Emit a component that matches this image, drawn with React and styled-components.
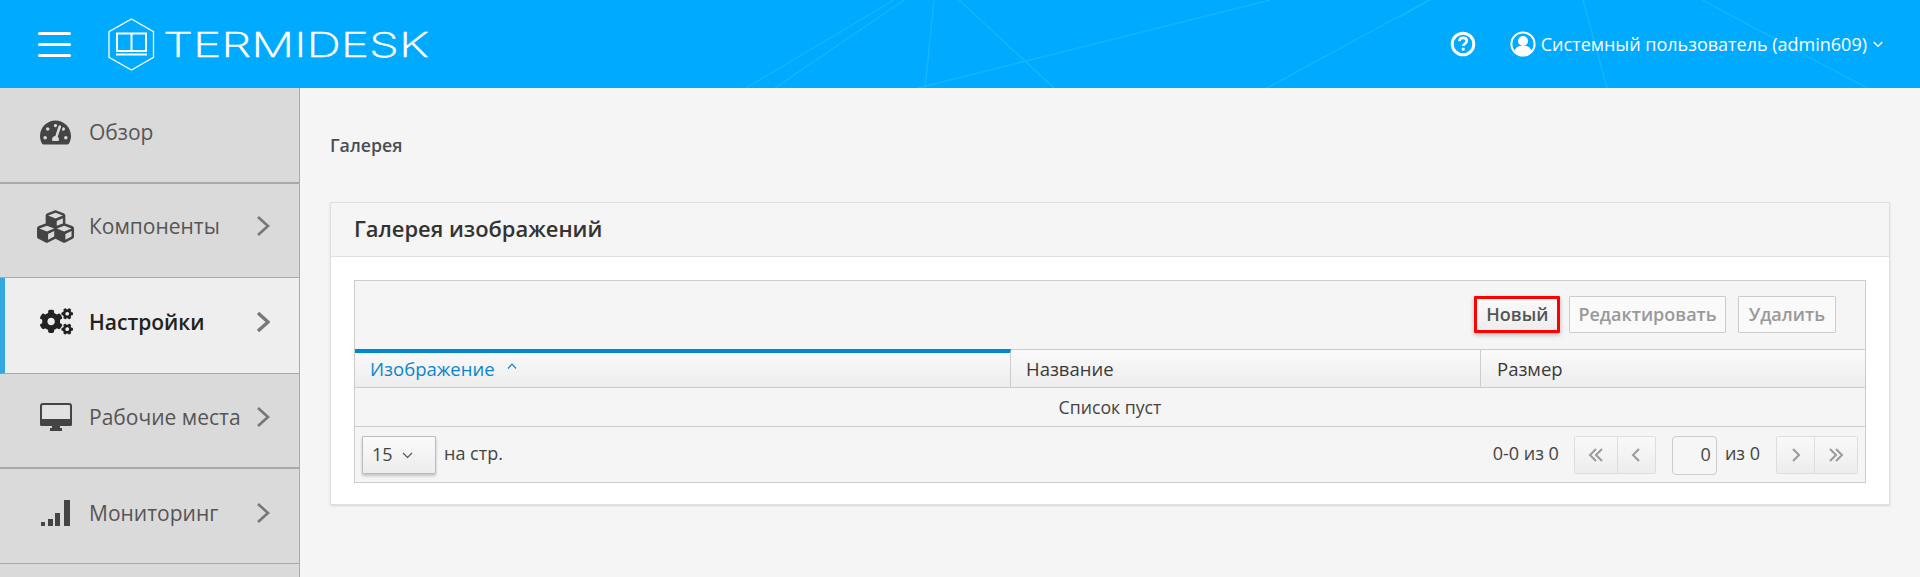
import React from 'react';
import styled, { createGlobalStyle } from 'styled-components';
import { FaTachometerAlt, FaCubes, FaCogs } from 'react-icons/fa';

const Global = createGlobalStyle`
  html, body { margin: 0; padding: 0; background: #f5f5f5; overflow: hidden; }
  body { font-family: "Open Sans", "Noto Sans", sans-serif; color: #444; }
  * { box-sizing: border-box; }
`;

const Page = styled.div`
  width: 1920px; height: 577px; display: flex; flex-direction: column; overflow: hidden;
`;
const Header = styled.header`
  position: relative; height: 88px; flex: none; background: #00aaff; display: flex; align-items: center; color: #fff;
`;
const Lines = styled.svg`
  position: absolute; inset: 0; width: 100%; height: 100%;
`;
const Burger = styled.div`
  position: relative; width: 33px; margin-left: 38px; display: flex; flex-direction: column; gap: 8px;
  span { display: block; height: 3px; background: #fff; border-radius: 2px; }
`;
const Logo = styled.div`
  position: relative; display: flex; align-items: center; margin-left: 37px; width: 322px;
`;
const Wordmark = styled.span`
  margin-left: 8px; margin-top: 2px; font-family: Inter, sans-serif; font-weight: 200; font-size: 34px; line-height: 1;
  display: inline-block; transform: scaleX(1.41); transform-origin: left center; letter-spacing: 0;
  -webkit-text-stroke: 0.5px #fff;
`;
const HeaderRight = styled.div`
  position: relative; margin-left: auto; display: flex; align-items: center; padding-right: 37px;
`;
const UserName = styled.span`
  font-size: 18px; margin-left: 5px; margin-right: 6px; white-space: nowrap; line-height: 24px;
`;
const Body = styled.div`
  flex: 1; display: flex; min-height: 0;
`;
const Sidebar = styled.aside`
  width: 300px; flex: none; background: #dadada; border-right: 1px solid #aaa;
`;
const NavItem = styled.div`
  height: ${p => p.$h}px; display: flex; align-items: center; position: relative;
  padding: 0 29px ${p => p.$pb}px ${p => (p.$active ? 35 : 40)}px;
  background: ${p => (p.$active ? '#eeeeee' : 'transparent')};
  border-left: ${p => (p.$active ? '5px solid #33a8e0' : '0')};
  border-bottom: ${p => p.$b}px solid #aaa;
  color: ${p => (p.$active ? '#222' : '#555')};
  font-size: 21px; font-weight: ${p => (p.$active ? 600 : 400)};
`;
const NavIcon = styled.span`
  width: 49px; flex: none; display: flex; align-items: center; color: ${p => (p.$active ? '#222' : '#444')};
`;
const NavLabel = styled.span`
  flex: 1; white-space: nowrap;
`;
const Main = styled.main`
  flex: 1; padding: 0 30px; min-width: 0;
`;
const Crumb = styled.div`
  font-size: 17.8px; font-weight: 600; color: #4a4d55; line-height: 24px; margin-top: 45px;
`;
const Card = styled.section`
  margin-top: 45px; background: #fff; border: 1px solid #e0e0e0; box-shadow: 0 1px 2px rgba(0,0,0,.12); height: 303px;
`;
const CardHead = styled.div`
  height: 54px; background: #f5f5f5; border-bottom: 1px solid #e0e0e0; padding: 0 23px 3px;
  display: flex; align-items: center; font-size: 21.9px; font-weight: 600; color: #333;
`;
const Grid = styled.div`
  margin: 23px 23px 0; height: 203px; border: 1px solid #ccc; background: #f5f5f5; display: flex; flex-direction: column;
`;
const Toolbar = styled.div`
  height: 69px; padding: 15px 29px 0 0; display: flex; justify-content: flex-end; align-items: flex-start;
  border-bottom: 1px solid #ccc; flex: none;
`;
const Btn = styled.button`
  height: 37px; padding: 0 ${p => p.$pad}px 2px; margin-left: ${p => p.$ml || 0}px;
  font: 600 18px/1 "Open Sans", sans-serif; border-radius: 1px;
  color: ${p => (p.$primary ? '#555' : '#999')};
  border: ${p => (p.$primary ? '3px solid #f00' : '1px solid #ccc')};
  background: ${p => (p.$primary ? 'linear-gradient(#fafafa,#eee)' : '#fafafa')};
  box-shadow: ${p => (p.$primary ? '0 2px 4px rgba(0,0,0,.25)' : 'none')};
`;
const HeadRow = styled.div`
  display: flex; height: 38px; border-bottom: 1px solid #ccc; flex: none;
  background: linear-gradient(#fafafa, #ededed);
`;
const HeadCell = styled.div`
  width: ${p => p.$w}px; flex: ${p => (p.$w ? 'none' : 1)}; padding: 0 0 ${p => (p.$sorted ? 4 : 0)}px ${p => p.$pl}px;
  display: flex; align-items: center; font-size: 18.5px; font-weight: ${p => (p.$sorted ? 400 : 500)};
  color: ${p => (p.$sorted ? '#0b85cf' : '#3a3a3a')};
  border-right: ${p => (p.$last ? 0 : '1px solid #ccc')};
  border-top: ${p => (p.$sorted ? '4px solid #0088ce' : '0')};
  margin-top: ${p => (p.$sorted ? '-1px' : 0)};
`;
const Caret = styled.svg`
  margin-left: 12px; margin-top: -5px;
`;
const Empty = styled.div`
  height: 39px; flex: none; display: flex; align-items: center; justify-content: center; font-size: 17.7px; color: #444;
  border-bottom: 1px solid #ccc;
`;
const Footer = styled.div`
  flex: 1; display: flex; align-items: center; padding: 0 7px; font-size: 18px; color: #444;
`;
const Select = styled.div`
  width: 74px; height: 38px; display: flex; align-items: center; padding: 0 0 2px 9px; gap: 9px;
  border: 1px solid #bbb; border-radius: 1px; font-size: 18px; color: #444;
  background: linear-gradient(#fafafa, #ededed); box-shadow: 0 2px 3px rgba(0,0,0,.2);
  svg { margin-top: 4px; }
`;
const Muted = styled.span`
  margin-left: ${p => p.$ml || 0}px; white-space: nowrap; margin-bottom: 3px;
`;
const Spacer = styled.div`flex: 1;`;
const Pager = styled.div`
  display: flex; height: 38px; margin-left: ${p => p.$ml}px; border: 1px solid #ddd; border-radius: 2px;
`;
const PagerBtn = styled.div`
  width: ${p => p.$w}px; display: flex; align-items: center; justify-content: center;
  background: linear-gradient(#f9f9f9, #ededed);
  border-left: ${p => (p.$first ? 0 : '1px solid #ddd')};
`;
const PageInput = styled.div`
  width: 45px; height: 39px; margin-left: 16px; margin-top: 1px; border: 1px solid #ccc; border-radius: 4px;
  background: #f6f6f6; display: flex; align-items: center; justify-content: flex-end; padding: 0 5px 2px 0; font-size: 18px; color: #444;
`;

const Chevron = ({ active }) => (
  <svg width="14" height="22" viewBox="0 0 14 22" fill="none" stroke="#777" strokeWidth={active ? 3.4 : 2.6}>
    <path d="M2 2l10 9-10 9" />
  </svg>
);
const SignalIcon = () => (
  <svg width="32" height="26" viewBox="0 0 32 26" fill="#444">
    <rect x="1" y="22" width="4" height="4" />
    <rect x="8" y="19" width="5" height="7" />
    <rect x="15" y="13" width="5" height="13" />
    <rect x="24" y="0" width="6" height="26" />
  </svg>
);
const MonitorIcon = () => (
  <svg width="32" height="28" viewBox="0 0 32 28">
    <rect x="1" y="1" width="30" height="21" rx="2" fill="#e2e2e2" stroke="#444" strokeWidth="2" />
    <rect x="0" y="16" width="32" height="7" rx="1.500" fill="#444" />
    <path d="M12 23h8v2h2v3H10v-3h2z" fill="#444" />
  </svg>
);
const Glyph = ({ d }) => (
  <svg width="18" height="16" viewBox="0 0 18 16" fill="none" stroke="#9a9a9a" strokeWidth="2"><path d={d} /></svg>
);
const nav = [
  { label: 'Обзор', icon: <FaTachometerAlt size={31} />, h: 96, b: 2, pb: 6 },
  { label: 'Компоненты', icon: <FaCubes size={37} style={{ marginLeft: -3 }} />, h: 94, b: 1, pb: 9, arrow: true },
  { label: 'Настройки', icon: <FaCogs size={33} />, h: 96, b: 1, pb: 8, arrow: true, active: true },
  { label: 'Рабочие места', icon: <MonitorIcon />, h: 95, b: 2, pb: 7, arrow: true },
  { label: 'Мониторинг', icon: <SignalIcon />, h: 95, b: 1, pb: 7, arrow: true },
];

export default function App() {
  return (
    <Page>
      <Global />
      <Header>
        <Lines viewBox="0 0 1920 88" fill="none" stroke="#14b6ff" strokeWidth="1.4">
          <path d="M894 0L746 88M904 0L775 88M934 0L925 88M959 0L1054 88M1270 0L918 88M1429 0L1267 88M1400 17L1430 0M1583 0L1607 88M1702 0L1867 88" />
        </Lines>
        <Burger><span /><span /><span /></Burger>
        <Logo>
          <svg width="47" height="53" viewBox="0 0 47 53" fill="none" stroke="#fff">
            <path d="M23.5 1L45.5 13.7V39.3L23.5 52L1 39.3V13.7Z" strokeWidth="1.3" />
            <path d="M9 15.5H38V33H9ZM23.5 15.5V33" strokeWidth="2" />
            <path d="M8 36.5H39" strokeWidth="2" />
          </svg>
          <Wordmark>TERMIDESK</Wordmark>
        </Logo>
        <HeaderRight>
          <svg width="26" height="26" viewBox="0 0 26 26" fill="none" style={{ marginRight: 34 }}>
            <circle cx="13" cy="13" r="10.8" stroke="#fff" strokeWidth="3" />
            <path d="M9.3 10.3c0-2.2 1.7-3.4 3.8-3.4s3.7 1.2 3.7 3.1c0 2.6-3.6 2.6-3.6 5" stroke="#fff" strokeWidth="2.6" />
            <rect x="11.8" y="16.8" width="2.8" height="2.8" fill="#fff" />
          </svg>
          <svg width="26" height="26" viewBox="0 0 26 26" fill="none">
            <circle cx="13" cy="13" r="11.6" stroke="#fff" strokeWidth="2" />
            <circle cx="13" cy="10" r="5" fill="#fff" />
            <path d="M4.5 20c1-3.6 3.8-5 6-5h5c2.2 0 5 1.4 6 5-2 2.6-5 4-8.500 4s-6.500-1.400-8.500-4z" fill="#fff" />
          </svg>
          <UserName>Системный пользователь (admin609)</UserName>
          <svg width="10" height="7" viewBox="0 0 10 7" fill="none" stroke="#fff" strokeWidth="1.500"><path d="M.7 1l4.300 4.300L9.300 1" /></svg>
        </HeaderRight>
      </Header>
      <Body>
        <Sidebar>
          {nav.map(n => (
            <NavItem key={n.label} $h={n.h} $b={n.b} $pb={n.pb} $active={n.active}>
              <NavIcon $active={n.active}>{n.icon}</NavIcon>
              <NavLabel>{n.label}</NavLabel>
              {n.arrow && <Chevron active={n.active} />}
            </NavItem>
          ))}
        </Sidebar>
        <Main>
          <Crumb>Галерея</Crumb>
          <Card>
            <CardHead>Галерея изображений</CardHead>
            <Grid>
              <Toolbar>
                <Btn $primary $pad={9}>Новый</Btn>
                <Btn $pad={8} $ml={9}>Редактировать</Btn>
                <Btn $pad={10} $ml={12}>Удалить</Btn>
              </Toolbar>
              <HeadRow>
                <HeadCell $w={656} $pl={15} $sorted>
                  Изображение
                  <Caret width="10" height="6" viewBox="0 0 10 6" fill="none" stroke="#0b85cf" strokeWidth="1.2"><path d="M1 5.500L5 1.200 9 5.500" /></Caret>
                </HeadCell>
                <HeadCell $w={470} $pl={15}>Название</HeadCell>
                <HeadCell $pl={16} $last>Размер</HeadCell>
              </HeadRow>
              <Empty>Список пуст</Empty>
              <Footer>
                <Select>
                  15
                  <svg width="11" height="7" viewBox="0 0 11 7" fill="none" stroke="#555" strokeWidth="1.200"><path d="M1 1l4.500 4.500L10 1" /></svg>
                </Select>
                <Muted $ml={8}>на стр.</Muted>
                <Spacer />
                <Muted>0-0 из 0</Muted>
                <Pager $ml={15}>
                  <PagerBtn $w={42} $first><Glyph d="M9 2L3 8l6 6M15 2L9 8l6 6" /></PagerBtn>
                  <PagerBtn $w={38}><Glyph d="M12 2L6 8l6 6" /></PagerBtn>
                </Pager>
                <PageInput>0</PageInput>
                <Muted $ml={8}>из 0</Muted>
                <Pager $ml={16}>
                  <PagerBtn $w={37} $first><Glyph d="M6 2l6 6-6 6" /></PagerBtn>
                  <PagerBtn $w={43}><Glyph d="M3 2l6 6-6 6M9 2l6 6-6 6" /></PagerBtn>
                </Pager>
              </Footer>
            </Grid>
          </Card>
        </Main>
      </Body>
    </Page>
  );
}
